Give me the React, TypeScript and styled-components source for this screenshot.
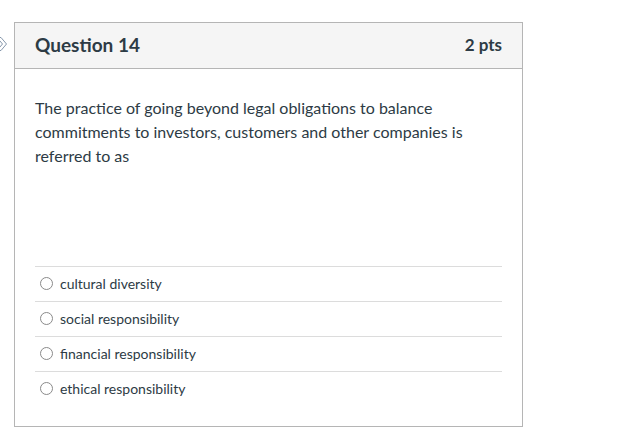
import React from "react";
import styled, { createGlobalStyle } from "styled-components";

const GlobalStyle = createGlobalStyle`
  html, body {
    margin: 0;
    padding: 0;
    background: #fff;
  }
  body {
    font-family: "Lato", "Liberation Sans", sans-serif;
    color: #2d3b45;
  }
`;

const Page = styled.div`
  display: flex;
  align-items: flex-start;
  padding-top: 22px;
`;

const Gutter = styled.div`
  width: 14px;
  flex-shrink: 0;
  padding-top: 15px;

  svg {
    display: block;
  }
`;

const Card = styled.div`
  width: 507px;
  border: 1px solid #b5b5b5;
  background: #fff;
`;

const Header = styled.div`
  display: flex;
  justify-content: space-between;
  align-items: center;
  height: 42px;
  padding: 0 20px 3px;
  background: #f5f5f5;
  border-bottom: 1px solid #b5b5b5;
`;

const Title = styled.h2`
  margin: 0;
  font-size: 19px;
  font-weight: 700;
  color: #2d3b45;
`;

const Points = styled.span`
  font-size: 17px;
  font-weight: 700;
  color: #2d3b45;
`;

const Body = styled.div`
  padding: 27px 20px 20px;
`;

const QuestionText = styled.p`
  margin: 0 0 98px;
  font-size: 16px;
  line-height: 24px;
`;

const Answer = styled.label`
  display: flex;
  align-items: center;
  gap: 7px;
  height: 35px;
  padding-bottom: 1px;
  box-sizing: border-box;
  border-top: 1px solid #dcdcdc;
  padding-left: 5px;
  font-size: 14px;
  color: #2d3b45;
`;

const Radio = styled.span`
  width: 11px;
  height: 11px;
  border-radius: 50%;
  border: 1px solid #8a8a8a;
  background: #fff;
  flex-shrink: 0;
`;

const answers = [
  "cultural diversity",
  "social responsibility",
  "financial responsibility",
  "ethical responsibility",
];

const App: React.FC = () => {
  return (
    <>
      <GlobalStyle />
      <Page>
        <Gutter>
          <svg width="8" height="14" viewBox="0 0 8 14">
            <path
              d="M-3 0.5 L1 0.5 L6.5 7 L1 13.5 L-3 13.5 L2.5 7 Z"
              fill="none"
              stroke="#8596ab"
              strokeWidth="1"
            />
          </svg>
        </Gutter>
        <Card>
          <Header>
            <Title>Question 14</Title>
            <Points>2 pts</Points>
          </Header>
          <Body>
            <QuestionText>
              The practice of going beyond legal obligations to balance
              commitments to investors, customers and other companies is
              referred to as
            </QuestionText>
            {answers.map((a) => (
              <Answer key={a}>
                <Radio />
                {a}
              </Answer>
            ))}
          </Body>
        </Card>
      </Page>
    </>
  );
};

export default App;
